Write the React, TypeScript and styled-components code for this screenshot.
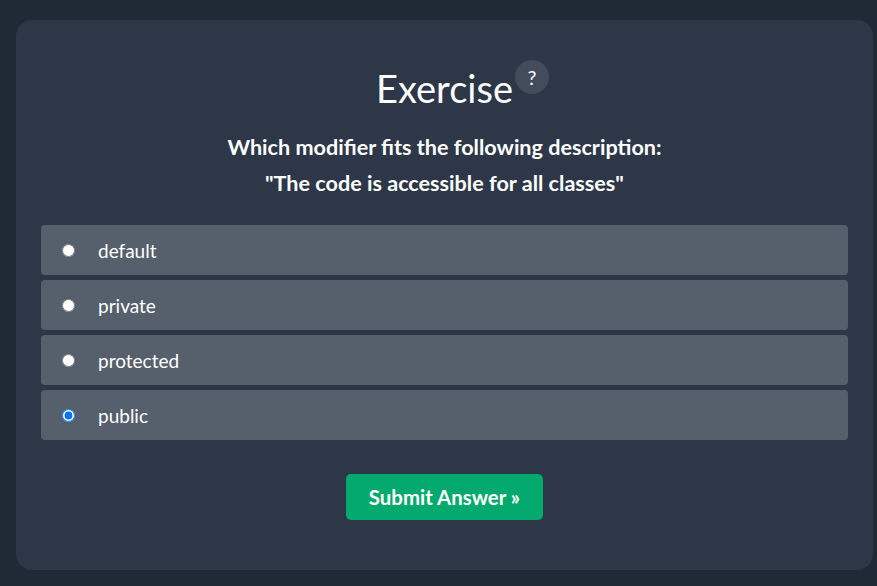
import React, { useState } from "react";
import styled, { createGlobalStyle } from "styled-components";

const Global = createGlobalStyle`
  html, body { margin: 0; padding: 0; background: #1f2a36; }
  body { font-family: Lato, "Liberation Sans", sans-serif; color: #fff; }
`;

const Page = styled.div`
  padding: 20px 4px 16px 16px;
  box-sizing: border-box;
  width: 877px;
  height: 586px;
`;

const Card = styled.div`
  background: #2d3748;
  border-radius: 16px;
  height: 550px;
  padding: 40px 25px 0 25px;
  box-sizing: border-box;
  display: flex;
  flex-direction: column;
  align-items: center;
`;

const TitleRow = styled.div`
  position: relative;
  display: inline-block;
`;

const Title = styled.h2`
  margin: 0;
  font-weight: 400;
  font-size: 38px;
  line-height: 56px;
`;

const Help = styled.span`
  position: absolute;
  top: 0px;
  right: -36px;
  width: 34px;
  height: 34px;
  border-radius: 50%;
  background: #434c5a;
  display: flex;
  align-items: center;
  justify-content: center;
  font-size: 20px;
  color: #fff;
`;

const Question = styled.p`
  margin: 13px 0 24px;
  text-align: center;
  font-weight: 700;
  font-size: 21.6px;
  line-height: 36px;
`;

const Options = styled.div`
  align-self: stretch;
  display: flex;
  flex-direction: column;
  gap: 5px;
`;

const Option = styled.label`
  display: flex;
  align-items: center;
  height: 50px;
  background: #565f6c;
  border-radius: 4px;
  padding-left: 21px;
  font-size: 19px;
  cursor: pointer;
  input {
    margin: 0 23px 0 0;
    width: 13px;
    height: 13px;
  }
`;

const Submit = styled.button`
  margin-top: 34px;
  background: #04aa6d;
  color: #fff;
  border: none;
  border-radius: 5px;
  width: 197px;
  height: 46px;
  font-family: inherit;
  font-weight: 700;
  font-size: 20.4px;
`;

const options = ["default", "private", "protected", "public"];

export default function App() {
  const [sel, setSel] = useState("public");
  return (
    <>
      <Global />
      <Page>
        <Card>
          <TitleRow>
            <Title>Exercise</Title>
            <Help>?</Help>
          </TitleRow>
          <Question>
            Which modifier fits the following description:
            <br />
            "The code is accessible for all classes"
          </Question>
          <Options>
            {options.map((o) => (
              <Option key={o}>
                <input
                  type="radio"
                  name="q"
                  checked={sel === o}
                  onChange={() => setSel(o)}
                />
                {o}
              </Option>
            ))}
          </Options>
          <Submit>Submit Answer »</Submit>
        </Card>
      </Page>
    </>
  );
}
